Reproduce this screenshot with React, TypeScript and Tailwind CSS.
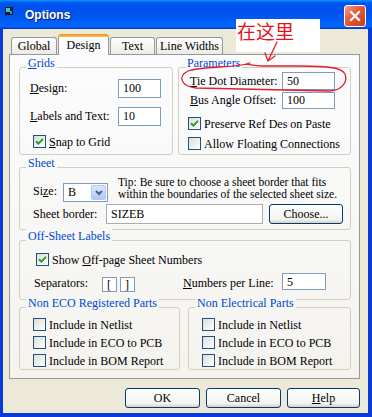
import React from 'react';

const serif = "font-['Liberation_Serif','Times_New_Roman',serif]";

function Check({ on }: { on?: boolean }) {
  return (
    <span className="w-[13px] h-[13px] shrink-0 border border-[#1C5180] bg-[linear-gradient(135deg,#DCDCD7,#FFFFFF)] flex items-center justify-center">
      {on && (
        <svg width="9" height="9" viewBox="0 0 9 9">
          <path d="M1 4.3 L3.4 6.6 L8 1.9" fill="none" stroke="#21A121" strokeWidth="2" />
        </svg>
      )}
    </span>
  );
}

function Field({ value, className }: { value: string; className: string }) {
  return (
    <div className={`border border-[#7F9DB9] bg-white pl-[4px] flex items-center leading-[14px] ${className}`}>
      {value}
    </div>
  );
}

interface GroupProps {
  title: React.ReactNode;
  capBg: string;
  className: string;
  children: React.ReactNode;
}

function Group({ title, capBg, className, children }: GroupProps) {
  return (
    <div className={`relative rounded-[3px] border border-[#D0D0BF] ${className}`}>
      <span className={`absolute left-[6px] top-[-12px] px-[2px] leading-[14px] text-[#0046D5] ${capBg}`}>{title}</span>
      {children}
    </div>
  );
}

function CheckRow({ on, label, className }: { on?: boolean; label: React.ReactNode; className?: string }) {
  return (
    <div className={`flex items-center gap-[3px] h-[13px] leading-[14px] ${className ?? ''}`}>
      <Check on={on} />
      <span>{label}</span>
    </div>
  );
}

function Btn({ children, className }: { children: React.ReactNode; className: string }) {
  return (
    <button
      type="button"
      className={`h-[20px] rounded-[3px] border border-[#003C74] bg-[linear-gradient(to_bottom,#FFFFFF,#F3F3EF_80%,#D6D0C5)] flex items-center justify-center leading-[14px] ${className}`}
    >
      {children}
    </button>
  );
}

function Tab({ label, w }: { label: string; w: string }) {
  return (
    <div
      className={`h-[17px] ${w} rounded-t-[3px] border border-b-0 border-[#919B9C] bg-[linear-gradient(to_bottom,#FFFFFF,#ECEBE6)] flex items-center justify-center leading-[14px]`}
    >
      {label}
    </div>
  );
}

export default function App() {
  return (
    <div className={`relative w-[372px] h-[417px] bg-[#0A3BD8] text-[12px] text-black overflow-hidden ${serif}`}>
      {/* title bar */}
      <div className="h-[29px] flex items-start bg-[linear-gradient(to_bottom,#0997FF_0%,#0053EE_10%,#0050EE_40%,#0062F8_85%,#0066FF_93%,#003DD7_97%,#003DD7_100%)]">
        <svg className="mt-[7px] ml-[5px]" width="8" height="8" viewBox="0 0 8 8">
          <rect width="8" height="8" fill="#101820" />
          <rect x="1" y="1" width="4" height="4" fill="#18D8C8" />
          <rect x="5" y="4" width="2" height="3" fill="#2090E0" />
        </svg>
        <span className="ml-[12px] mt-[8px] leading-[15px] text-[12px] font-bold text-white font-['Liberation_Sans',Arial,sans-serif] [text-shadow:1px_1px_0_#0A1C7A]">
          Options
        </span>
        <div className="ml-auto mr-[6px] mt-[5px] w-[22px] h-[22px] rounded-[3px] border border-white bg-[linear-gradient(135deg,#F0A08A,#E2583A_45%,#C8401E)] flex items-center justify-center">
          <svg width="12" height="12" viewBox="0 0 12 12">
            <path d="M2 2 L10 10 M10 2 L2 10" stroke="#FFFFFF" strokeWidth="2.2" strokeLinecap="square" />
          </svg>
        </div>
      </div>

      {/* body */}
      <div className="ml-[3px] w-[365px] h-[384px] bg-[#ECE9D8] flex flex-col">
        {/* tabs */}
        <div className="mt-[5px] h-[20px] pl-[8px] flex items-end">
          <Tab label="Global" w="w-[46px]" />
          <div className="relative z-10 mb-[-1px] ml-[1px] w-[51px] h-[21px] flex flex-col">
            <div className="h-[3px] rounded-t-[3px] bg-[linear-gradient(to_bottom,#E68B2C,#FFC73C)]" />
            <div className="flex-1 border-x border-[#919B9C] bg-[#FCFCFE] flex items-center justify-center pb-[2px] leading-[14px]">
              Design
            </div>
          </div>
          <Tab label="Text" w="ml-[1px] w-[45px]" />
          <Tab label="Line Widths" w="ml-[1px] w-[67px]" />
        </div>

        {/* panel */}
        <div className="ml-[6px] w-[351px] h-[325px] border border-[#919B9C] bg-[linear-gradient(to_bottom,#FCFCFE,#F4F3EE)] pl-[9px] flex flex-col">
          {/* row 1 */}
          <div className="mt-[12px] h-[88px] flex gap-[5px]">
            <Group title={<><u>G</u>rids</>} capBg="bg-[#FCFCFE]" className="w-[154px] h-full flex flex-col">
              <div className="mt-[11px] pl-[10px] h-[18px] flex items-center">
                <span className="w-[88px] leading-[14px]"><u>D</u>esign:</span>
                <Field value="100" className="w-[43px] h-[19px]" />
              </div>
              <div className="mt-[10px] pl-[10px] h-[18px] flex items-center">
                <span className="w-[88px] leading-[14px]"><u>L</u>abels and Text:</span>
                <Field value="10" className="w-[43px] h-[19px]" />
              </div>
              <CheckRow on label={<><u>S</u>nap to Grid</>} className="mt-[10px] pl-[13px]" />
            </Group>
            <Group title="Parameters" capBg="bg-[#FCFCFE]" className="w-[173px] h-full flex flex-col">
              <div className="mt-[4px] pl-[11px] h-[18px] flex items-center">
                <span className="w-[92px] leading-[14px]"><u>T</u>ie Dot Diameter:</span>
                <Field value="50" className="w-[53px] h-[18px]" />
              </div>
              <div className="mt-[1px] pl-[11px] h-[18px] flex items-center">
                <span className="w-[92px] leading-[14px]"><u>B</u>us Angle Offset:</span>
                <Field value="100" className="w-[53px] h-[17px]" />
              </div>
              <CheckRow on label="Preserve Ref Des on Paste" className="mt-[8px] pl-[9px]" />
              <CheckRow label="Allow Floating Connections" className="mt-[7px] pl-[9px]" />
            </Group>
          </div>

          {/* sheet */}
          <Group title="Sheet" capBg="bg-[#FAFAF9]" className="mt-[12px] w-[332px] h-[63px] flex flex-col">
            <div className="mt-[8px] h-[24px] pl-[13px] flex items-start">
              <span className="w-[30px] mt-[8px] leading-[14px]">Si<u>z</u>e:</span>
              <div className="mt-[7px] w-[45px] h-[19px] border border-[#7F9DB9] bg-white flex">
                <span className="flex-1 pl-[4px] leading-[17px]">B</span>
                <span className="w-[15px] m-[1px] rounded-[2px] border border-[#B1C7F5] bg-[linear-gradient(to_bottom,#DCE6FC,#B4C8F5)] flex items-center justify-center">
                  <svg width="8" height="6" viewBox="0 0 8 6">
                    <path d="M1 1 L4 4 L7 1" fill="none" stroke="#4D6185" strokeWidth="2" />
                  </svg>
                </span>
              </div>
              <div className="ml-[10px] text-[11.5px] leading-[12px]">
                Tip: Be sure to choose a sheet border that fits
                <br />
                within the boundaries of the selected sheet size.
              </div>
            </div>
            <div className="mt-[4px] h-[20px] pl-[13px] flex items-center">
              <span className="w-[73px] leading-[14px]">Sheet border:</span>
              <Field value="SIZEB" className="w-[157px] h-[20px] border-[#A5ACB2] bg-[#F6F6F3]" />
              <Btn className="ml-[6px] w-[74px] h-[19px]">Choose...</Btn>
            </div>
          </Group>

          {/* off-sheet labels */}
          <Group title="Off-Sheet Labels" capBg="bg-[#F8F8F5]" className="mt-[10px] w-[332px] h-[60px] flex flex-col">
            <CheckRow on label={<>Show <u>O</u>ff-page Sheet Numbers</>} className="mt-[12px] pl-[16px]" />
            <div className="mt-[7px] pl-[14px] flex items-start">
              <span className="w-[68px] mt-[3px] leading-[14px]">Separators:</span>
              <Field value="[" className="mt-[4px] w-[15px] h-[15px] pl-[3px]" />
              <Field value="]" className="mt-[4px] ml-[3px] w-[15px] h-[15px] pl-[3px]" />
              <span className="ml-[48px] w-[99px] mt-[3px] leading-[14px]"><u>N</u>umbers per Line:</span>
              <Field value="5" className="w-[44px] h-[17px]" />
            </div>
          </Group>

          {/* bottom groups */}
          <div className="mt-[7px] h-[63px] flex gap-[8px]">
            <Group title="Non ECO Registered Parts" capBg="bg-[#F6F6F2]" className="w-[161px] h-full flex flex-col gap-[5px] pt-[10px] pl-[13px]">
              <CheckRow label="Include in Netlist" />
              <CheckRow label="Include in ECO to PCB" />
              <CheckRow label="Include in BOM Report" />
            </Group>
            <Group title="Non Electrical Parts" capBg="bg-[#F6F6F2]" className="w-[163px] h-full flex flex-col gap-[5px] pt-[10px] pl-[13px]">
              <CheckRow label="Include in Netlist" />
              <CheckRow label="Include in ECO to PCB" />
              <CheckRow label="Include in BOM Report" />
            </Group>
          </div>
        </div>

        {/* buttons */}
        <div className="mt-[9px] pr-[8px] flex justify-end gap-[6px]">
          <Btn className="w-[75px]">OK</Btn>
          <Btn className="w-[75px]">Cancel</Btn>
          <Btn className="w-[73px]"><span><u>H</u>elp</span></Btn>
        </div>
      </div>

      {/* annotation added on top of the screenshot */}
      <div className="absolute left-[236px] top-[19px] w-[84px] h-[33px] bg-white pl-[1px] pt-[2px] text-[19px] leading-[20px] text-[#E4121B] font-['Noto_Sans_CJK_SC',sans-serif]">
        在这里
      </div>
      <svg className="absolute left-0 top-0 pointer-events-none" width="372" height="417" viewBox="0 0 372 417">
        <g fill="none" stroke="#E0202A" strokeWidth="1.3" strokeLinecap="round">
          <path d="M277 42 L268 61 M268 61 L265 53 M268 61 L275 56" />
          <path d="M250 63 C 238 68, 202 66, 188 71 C 178 76, 180 86, 196 88 L 330 91 C 342 90, 348 82, 345 74 C 342 68, 330 66, 300 66 L 262 66 C 256 66, 252 65, 246 64" />
        </g>
      </svg>
    </div>
  );
}
